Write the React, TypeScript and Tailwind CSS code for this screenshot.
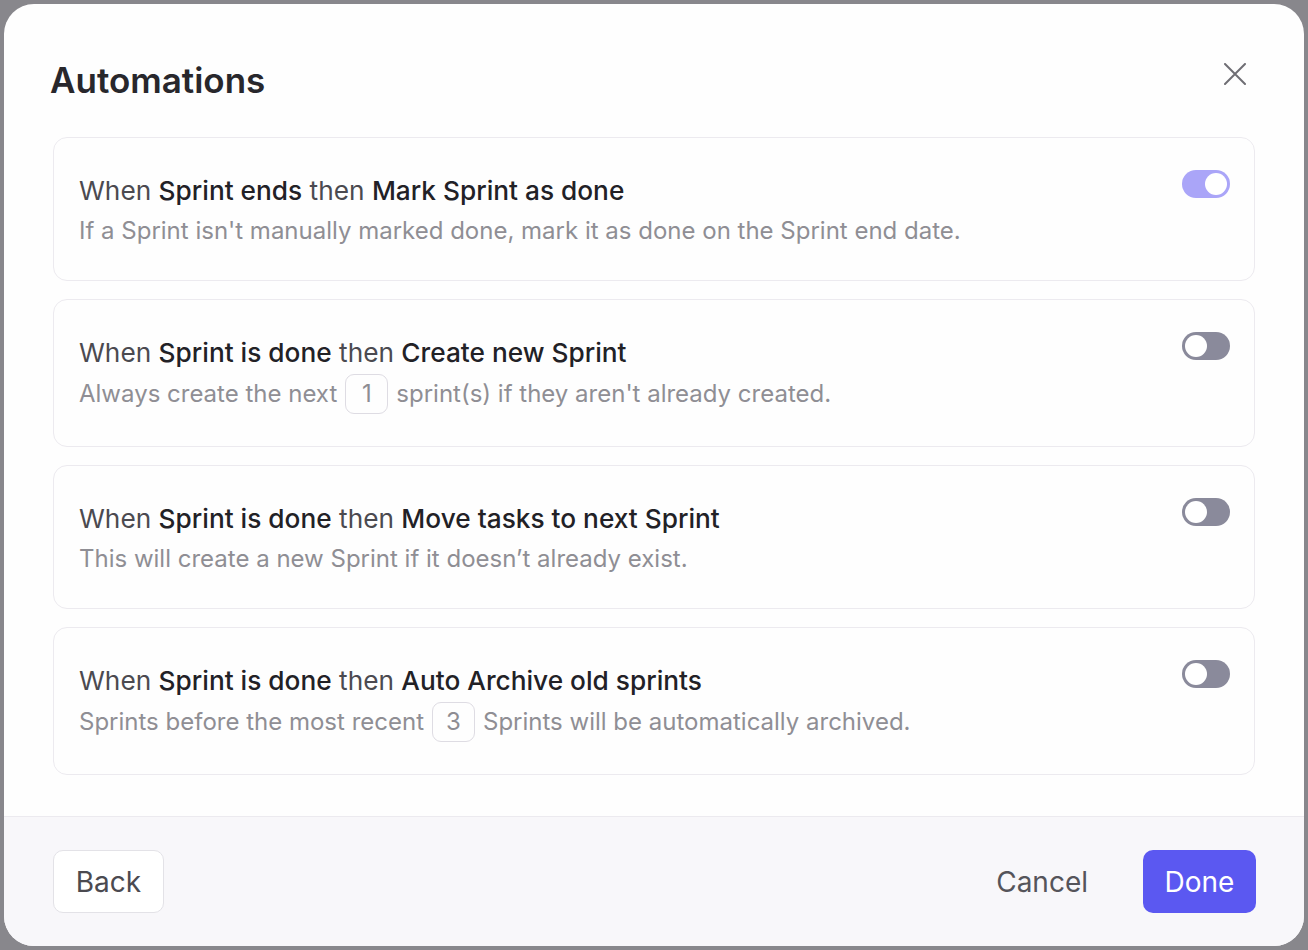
import React, { useState } from 'react';

interface Rule {
  trigger: string;
  action: string;
  enabled: boolean;
  desc: React.ReactNode;
}

function NumBox({ value }: { value: number }) {
  return (
    <span className="mx-[8px] inline-flex h-[40px] w-[43px] items-center justify-center rounded-[9px] border border-[#dedce3] text-[#8e8d93]">
      {value}
    </span>
  );
}

function Toggle({ on, onClick }: { on: boolean; onClick: () => void }) {
  return (
    <button
      onClick={onClick}
      className={
        'mt-[-4px] flex h-[28px] w-[48px] shrink-0 items-center rounded-full px-[3px] ' +
        (on ? 'justify-end bg-[#aaa5f8]' : 'justify-start bg-[#8a8a9b]')
      }
    >
      <span className="h-[22px] w-[22px] rounded-full bg-white" />
    </button>
  );
}

export default function App() {
  const [rules, setRules] = useState<Rule[]>([
    {
      trigger: 'Sprint ends',
      action: 'Mark Sprint as done',
      enabled: true,
      desc: "If a Sprint isn't manually marked done, mark it as done on the Sprint end date.",
    },
    {
      trigger: 'Sprint is done',
      action: 'Create new Sprint',
      enabled: false,
      desc: (
        <>
          Always create the next <NumBox value={1} /> sprint(s) if they aren't already created.
        </>
      ),
    },
    {
      trigger: 'Sprint is done',
      action: 'Move tasks to next Sprint',
      enabled: false,
      desc: 'This will create a new Sprint if it doesn\u2019t already exist.',
    },
    {
      trigger: 'Sprint is done',
      action: 'Auto Archive old sprints',
      enabled: false,
      desc: (
        <>
          Sprints before the most recent <NumBox value={3} /> Sprints will be automatically archived.
        </>
      ),
    },
  ]);

  const toggle = (i: number) =>
    setRules((r) => r.map((x, j) => (j === i ? { ...x, enabled: !x.enabled } : x)));

  return (
    <div
      className="h-[950px] w-[1308px] bg-[#88878c] p-[4px]"
      style={{ fontFamily: 'Inter, "Noto Sans", sans-serif' }}
    >
      <div className="flex h-[942px] w-[1300px] flex-col overflow-hidden rounded-[30px] bg-[#fefefe]">
        {/* header */}
        <div className="flex items-start justify-between pl-[46px] pr-[58px] pt-[56px]">
          <h1 className="text-[35px] font-semibold leading-[40px] text-[#28272c]">Automations</h1>
          <button className="mt-[3px] text-[#6f6e74]">
            <svg width="22" height="22" viewBox="0 0 22 22" fill="none" stroke="currentColor" strokeWidth="2" strokeLinecap="round">
              <path d="M1 1L21 21M21 1L1 21" />
            </svg>
          </button>
        </div>

        {/* rules */}
        <div className="mt-[37px] flex flex-col gap-[18px] px-[49px]">
          {rules.map((r, i) => (
            <div
              key={i}
              className="flex items-start justify-between rounded-[14px] border border-[#eceaef] pb-[32px] pl-[25px] pr-[24px] pt-[36px]"
            >
              <div>
                <div className="text-[26.25px] leading-[34px] text-[#4b4a50]">
                  When <span className="font-medium text-[#222126]">{r.trigger}</span> then{' '}
                  <span className="font-medium text-[#222126]">{r.action}</span>
                </div>
                <div
                  className={
                    'flex items-center text-[24px] text-[#8f8e94] ' +
                    (typeof r.desc === 'string' ? 'mt-[8px] h-[30px] mb-[2px]' : 'mt-[4px] h-[40px]')
                  }
                >
                  {r.desc}
                </div>
              </div>
              <Toggle on={r.enabled} onClick={() => toggle(i)} />
            </div>
          ))}
        </div>

        {/* footer */}
        <div className="mt-auto flex h-[130px] items-center justify-between border-t border-[#eceaef] bg-[#f8f7fa] pl-[49px] pr-[48px]">
          <button className="h-[63px] w-[111px] rounded-[10px] border border-[#e3e2e7] bg-white text-[28px] text-[#4b4a50]">
            Back
          </button>
          <div className="flex items-center">
            <button className="mr-[55px] text-[28px] text-[#55545a]">Cancel</button>
            <button className="h-[63px] w-[113px] rounded-[10px] bg-[#5b58f1] text-[28px] text-white">
              Done
            </button>
          </div>
        </div>
      </div>
    </div>
  );
}
